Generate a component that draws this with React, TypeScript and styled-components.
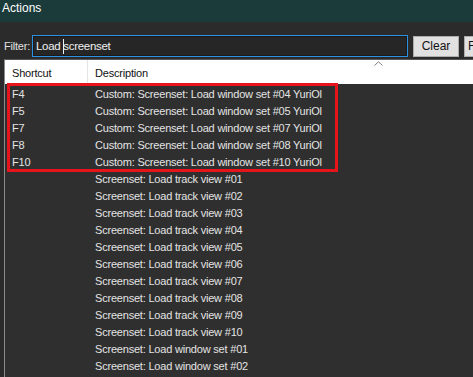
import styled, { createGlobalStyle } from 'styled-components';

const GlobalStyle = createGlobalStyle`
  html, body {
    margin: 0;
    padding: 0;
    background: #2b2b2b;
    overflow: hidden;
  }
`;

const trackViews = ['01', '02', '03', '04', '05', '06', '07', '08', '09', '10'];

const customRows = [
  { key: 'F4', num: '04' },
  { key: 'F5', num: '05' },
  { key: 'F7', num: '07' },
  { key: 'F8', num: '08' },
  { key: 'F10', num: '10' },
];

const App = () => {
  return (
    <Window>
      <GlobalStyle />
      <TitleBar>Actions</TitleBar>
      <Toolbar>
        <FilterLabel>Filter:</FilterLabel>
        <FilterInput>
          Load <Caret />screenset
        </FilterInput>
        <Button>Clear</Button>
        <Button $cut>F</Button>
      </Toolbar>
      <List>
        <Header>
          <HeadCell $w={83}>Shortcut</HeadCell>
          <HeadCell>Description</HeadCell>
          <SortArrow viewBox="0 0 9 5" width="9" height="5">
            <path d="M0.5 4.5 L4.5 0.8 L8.5 4.5" fill="none" stroke="#808080" strokeWidth="1" />
          </SortArrow>
        </Header>
        <Marked>
          {customRows.map((r) => (
            <Row key={r.key}>
              <Cell $w={83}>{r.key}</Cell>
              <Cell>Custom: Screenset: Load window set #{r.num} YuriOl</Cell>
            </Row>
          ))}
        </Marked>
        {trackViews.map((n) => (
          <Row key={n}>
            <Cell $w={83}></Cell>
            <Cell>Screenset: Load track view #{n}</Cell>
          </Row>
        ))}
        <Row>
          <Cell $w={83}></Cell>
          <Cell>Screenset: Load window set #01</Cell>
        </Row>
        <Row>
          <Cell $w={83}></Cell>
          <Cell>Screenset: Load window set #02</Cell>
        </Row>
      </List>
    </Window>
  );
};

const Window = styled.div`
  width: 473px;
  height: 377px;
  display: flex;
  flex-direction: column;
  background: #2b2b2b;
  font-family: "Liberation Sans", Arial, sans-serif;
  font-size: 11px;
  letter-spacing: -0.2px;
  color: #e6e6e6;
  overflow: hidden;
`;

const TitleBar = styled.div`
  height: 22px;
  flex: none;
  background: #1b3a3a;
  color: #ffffff;
  font-size: 12px;
  letter-spacing: 0;
  line-height: 16px;
  padding-left: 2px;
  box-sizing: border-box;
`;

const Toolbar = styled.div`
  height: 37px;
  flex: none;
  display: flex;
  align-items: center;
  padding: 11px 0 0 4px;
  box-sizing: border-box;
  white-space: nowrap;
`;

const FilterLabel = styled.span`
  width: 28px;
  flex: none;
  color: #e0e0e0;
`;

const FilterInput = styled.div`
  width: 376px;
  height: 22px;
  flex: none;
  box-sizing: border-box;
  border: 1px solid #2f8fe0;
  box-shadow: inset 0 0 0 1px #1a1a1a;
  background: #262626;
  color: #f0f0f0;
  font-size: 11.5px;
  letter-spacing: -0.3px;
  line-height: 19px;
  padding-left: 3px;
  display: flex;
  align-items: center;
  white-space: pre;
`;

const Caret = styled.span`
  display: inline-block;
  width: 1px;
  height: 15px;
  background: #f0f0f0;
  margin-right: -1px;
`;

const Button = styled.div<{ $cut?: boolean }>`
  width: ${(p) => (p.$cut ? '30px' : '46px')};
  height: 21px;
  flex: none;
  box-sizing: border-box;
  margin-left: 5px;
  background: #e1e1e1;
  border: 1px solid #adadad;
  color: #111;
  font-size: 12px;
  letter-spacing: 0;
  line-height: 19px;
  text-align: ${(p) => (p.$cut ? 'left' : 'center')};
  padding-left: ${(p) => (p.$cut ? '3px' : '0')};
`;

const List = styled.div`
  flex: 1;
  margin-left: 4px;
  border-left: 1px solid #8a8a8a;
  border-top: 1px solid #555;
  background: #2f2f2f;
  overflow: hidden;
`;

const Header = styled.div`
  position: relative;
  height: 24px;
  display: flex;
  background: #ffffff;
  color: #111;
  border-bottom: 1px solid #2f2f2f;
`;

const HeadCell = styled.div<{ $w?: number }>`
  width: ${(p) => (p.$w ? `${p.$w}px` : 'auto')};
  flex: ${(p) => (p.$w ? 'none' : '1')};
  box-sizing: border-box;
  padding: 7px 0 0 7px;
  border-right: ${(p) => (p.$w ? '1px solid #e5e5e5' : 'none')};
`;

const SortArrow = styled.svg`
  position: absolute;
  left: 369px;
  top: 1px;
`;

const Marked = styled.div`
  position: relative;

  &::after {
    content: '';
    position: absolute;
    left: 2px;
    top: -2px;
    width: 331px;
    bottom: -2px;
    border: 3px solid #e8141c;
    box-sizing: border-box;
    pointer-events: none;
  }
`;

const Row = styled.div`
  height: 17px;
  display: flex;
  align-items: center;
  white-space: nowrap;
`;

const Cell = styled.div<{ $w?: number }>`
  width: ${(p) => (p.$w ? `${p.$w}px` : 'auto')};
  flex: ${(p) => (p.$w ? 'none' : '1')};
  padding-left: 7px;
  box-sizing: border-box;
  color: #e4e4e4;
`;

export default App;
